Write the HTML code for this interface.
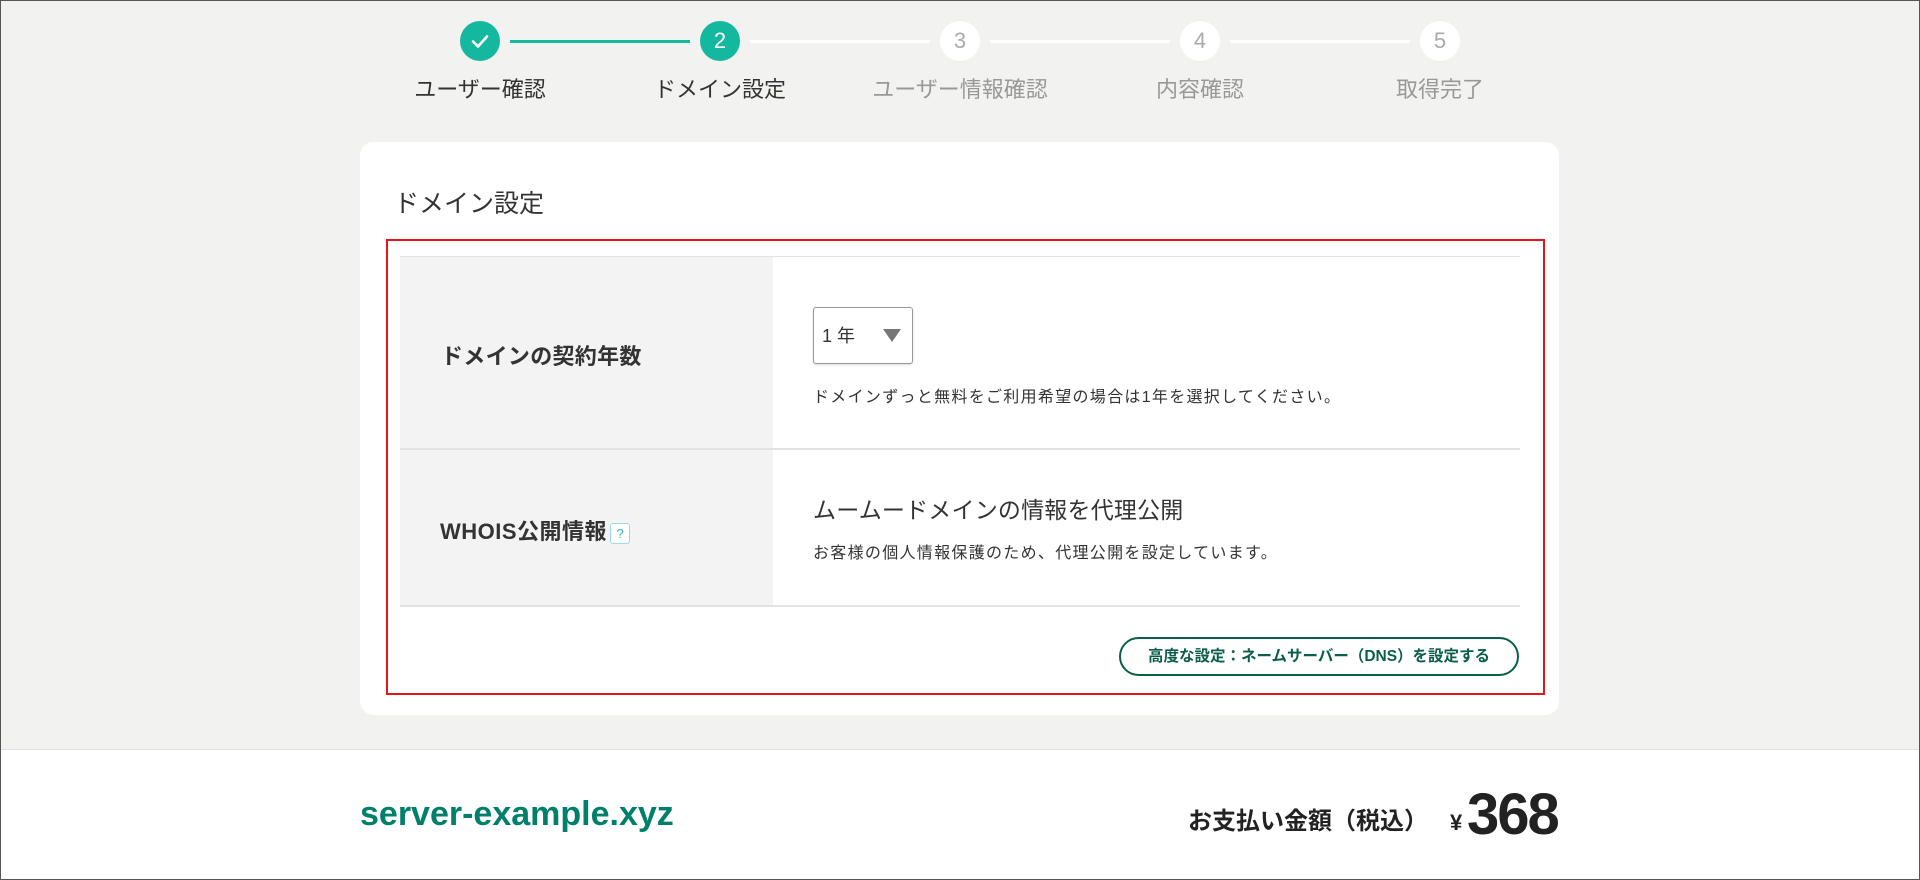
<!DOCTYPE html>
<html><head><meta charset="utf-8"><style>
*{margin:0;padding:0;box-sizing:border-box}
body{width:1920px;height:880px;overflow:hidden;font-family:"Liberation Sans","Noto Sans CJK JP",sans-serif;color:#333;position:relative;background:#fff}
.top{position:absolute;left:0;top:0;width:1920px;height:750px;background:#f2f2f0;border-bottom:1px solid #e2e2e2}
.frame{position:absolute;left:0;top:0;width:1920px;height:880px;border:1px solid #555;pointer-events:none}
.abs{position:absolute}
.c{position:absolute;width:40px;height:40px;border-radius:50%;top:21px;text-align:center;line-height:40px;font-size:22px}
.on{background:#14b89f;color:#fff}
.off{background:#fff;color:#aaa}
.ln{position:absolute;top:40px;height:3px;width:180px}
.lb{position:absolute;top:72px;width:240px;text-align:center;font-size:22px}
.card{position:absolute;left:360px;top:142px;width:1199px;height:573px;background:#fff;border-radius:14px}
</style></head><body>
<div class="top"></div>
<div class="ln" style="left:510px;background:#14b89f"></div>
<div class="ln" style="left:750px;background:#fff"></div>
<div class="ln" style="left:990px;background:#fff"></div>
<div class="ln" style="left:1230px;background:#fff"></div>
<div class="c on" style="left:460px"><svg width="40" height="40" viewBox="0 0 40 40" style="display:block"><path d="M13 20.5l5 5 9-10" stroke="#fff" stroke-width="2.6" fill="none" stroke-linecap="round" stroke-linejoin="round"/></svg></div>
<div class="c on" style="left:700px">2</div>
<div class="c off" style="left:940px">3</div>
<div class="c off" style="left:1180px">4</div>
<div class="c off" style="left:1420px">5</div>
<div class="lb" style="left:360px;color:#333">ユーザー確認</div>
<div class="lb" style="left:600px;color:#333">ドメイン設定</div>
<div class="lb" style="left:840px;color:#999">ユーザー情報確認</div>
<div class="lb" style="left:1080px;color:#999">内容確認</div>
<div class="lb" style="left:1320px;color:#999">取得完了</div>

<div class="card"></div>
<div class="abs" style="left:394px;top:184px;font-size:25px;color:#333">ドメイン設定</div>
<div class="abs" style="left:386px;top:239px;width:1159px;height:456px;border:2px solid #e8141b"></div>
<div class="abs" style="left:400px;top:256px;width:1120px;height:1px;background:#e2e2e2"></div>
<div class="abs" style="left:400px;top:257px;width:373px;height:348px;background:#f3f3f3"></div>
<div class="abs" style="left:400px;top:448px;width:1120px;height:2px;background:#e2e2e2"></div>
<div class="abs" style="left:400px;top:605px;width:1120px;height:2px;background:#e2e2e2"></div>
<div class="abs" style="left:441px;top:339px;font-size:22px;font-weight:bold;color:#333;letter-spacing:.3px">ドメインの契約年数</div>
<div class="abs" style="left:813px;top:307px;width:100px;height:57px;border:1px solid #999;border-radius:3px;background:#fff;box-shadow:0 1px 2px rgba(0,0,0,.15)"></div>
<div class="abs" style="left:822px;top:322px;font-size:18px;color:#333">1 年</div>
<div class="abs" style="left:883px;top:329px;width:0;height:0;border-left:9px solid transparent;border-right:9px solid transparent;border-top:13px solid #777"></div>
<div class="abs" style="left:813px;top:383px;font-size:16px;color:#333;letter-spacing:1.3px">ドメインずっと無料をご利用希望の場合は1年を選択してください。</div>
<div class="abs" style="left:440px;top:514px;font-size:22px;font-weight:bold;color:#333;letter-spacing:.5px;white-space:nowrap">WHOIS公開情報<span style="display:inline-block;vertical-align:middle;margin-left:3px;width:20px;height:21px;border:1px solid #9ed8e6;border-radius:3px;background:#fff;color:#3ab0d0;font-size:13px;font-weight:normal;text-align:center;line-height:19px;letter-spacing:0">?</span></div>
<div class="abs" style="left:813px;top:491px;font-size:23px;color:#333;letter-spacing:.2px">ムームードメインの情報を代理公開</div>
<div class="abs" style="left:813px;top:539px;font-size:16px;color:#333;letter-spacing:1.3px">お客様の個人情報保護のため、代理公開を設定しています。</div>
<div class="abs" style="left:1119px;top:637px;width:400px;height:39px;border:2px solid #0b5e4a;border-radius:20px;color:#0b5e4a;font-weight:bold;font-size:15.5px;text-align:center;line-height:35px">高度な設定：ネームサーバー（DNS）を設定する</div>

<div class="abs" style="left:360px;top:795px;font-size:34px;font-weight:bold;color:#00806a">server-example.xyz</div>
<div class="abs" style="left:1188px;top:801px;font-size:24px;font-weight:bold;color:#222">お支払い金額（税込）</div>
<div class="abs" style="left:1450px;top:810px;font-size:22px;font-weight:bold;color:#222">¥</div>
<div class="abs" style="left:1467px;top:781px;font-size:58px;font-weight:bold;color:#222;letter-spacing:-2px">368</div>
<div class="frame"></div>
</body></html>
